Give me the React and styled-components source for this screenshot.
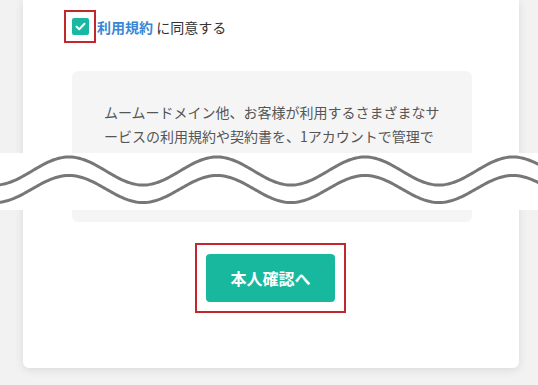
import React from 'react';
import styled, { createGlobalStyle } from 'styled-components';

const GlobalStyle = createGlobalStyle`
    html, body {
        margin: 0;
        padding: 0;
        background: #f2f2f2;
    }
    body {
        font-family: "Noto Sans CJK JP", "Noto Sans", sans-serif;
        color: #333;
    }
`;

const wave = (center, amp, peak, period) => {
    let d = '';
    for (let x = -4; x <= 542; x += 2) {
        const y = center - amp * Math.cos((2 * Math.PI * (x - peak)) / period);
        d += (x === -4 ? 'M' : 'L') + x + ' ' + y.toFixed(2) + ' ';
    }
    return d;
};

export default function App() {
    return (
        <Page>
            <GlobalStyle />
            <Card>
                <AgreeRow>
                    <Highlight>
                        <CheckBox>
                            <svg width="11" height="9" viewBox="0 0 11 9">
                                <path d="M1.5 4.6 L4.2 7.2 L9.5 1.8" fill="none" stroke="#fff" strokeWidth="2" strokeLinecap="round" strokeLinejoin="round" />
                            </svg>
                        </CheckBox>
                    </Highlight>
                    <Label>
                        <TermsLink>利用規約</TermsLink> に同意する
                    </Label>
                </AgreeRow>

                <TermsBox>
                    <TermsText>
                        ムームードメイン他、お客様が利用するさまざまなサービスの利用規約や契約書を、1アカウントで管理できます。「ムームーID」でログインし、各種サービスの契約内容を確認できます。
                    </TermsText>
                </TermsBox>

                <ButtonArea>
                    <Highlight $pad="9px">
                        <PrimaryButton>本人確認へ</PrimaryButton>
                    </Highlight>
                </ButtonArea>
            </Card>

            <BreakBand>
                <svg width="538" height="57" viewBox="0 0 538 57">
                    <path d={wave(18, 14, 69, 148)} fill="none" stroke="#777" strokeWidth="3" />
                    <path d={wave(36, 13.5, 69, 148)} fill="none" stroke="#777" strokeWidth="3" />
                </svg>
            </BreakBand>
        </Page>
    );
}

const Page = styled.div`
    position: relative;
    height: 385px;
    overflow: hidden;
    padding: 0 19px 0 23px;
`;

const Card = styled.div`
    background: #fff;
    border-radius: 0 0 6px 6px;
    box-shadow: 0 2px 10px rgba(0, 0, 0, 0.1);
    padding: 10px 47px 55px 49px;
`;

const AgreeRow = styled.div`
    display: flex;
    align-items: center;
    margin-left: -8px;
    gap: 1px;
`;

const Highlight = styled.div`
    display: inline-flex;
    border: 2px solid #c1272d;
    padding: ${p => p.$pad || '6px 5px 6px 6px'};
`;

const CheckBox = styled.span`
    display: flex;
    align-items: center;
    justify-content: center;
    width: 17px;
    height: 17px;
    border-radius: 2px;
    background: #19b8a0;
`;

const Label = styled.span`
    font-size: 14px;
    line-height: 20px;
    color: #333;
`;

const TermsLink = styled.span`
    color: #3a86d6;
    font-weight: bold;
`;

const TermsBox = styled.div`
    margin-top: 28px;
    height: 151px;
    overflow: hidden;
    background: #f5f5f5;
    border-radius: 6px;
    padding: 29px 28px 0 32px;
    box-sizing: border-box;
`;

const TermsText = styled.p`
    margin: 0;
    font-size: 14px;
    line-height: 24px;
    color: #555;
`;

const ButtonArea = styled.div`
    display: flex;
    justify-content: center;
    margin-top: 21px;
    margin-left: -3px;
`;

const PrimaryButton = styled.button`
    width: 129px;
    height: 48px;
    border: none;
    border-radius: 4px;
    background: #17b89d;
    color: #fff;
    font-family: inherit;
    font-size: 16px;
    font-weight: bold;
    cursor: pointer;
`;

const BreakBand = styled.div`
    position: absolute;
    left: 0;
    right: 0;
    top: 153px;
    height: 57px;
    background: #fff;
    svg {
        display: block;
    }
`;
